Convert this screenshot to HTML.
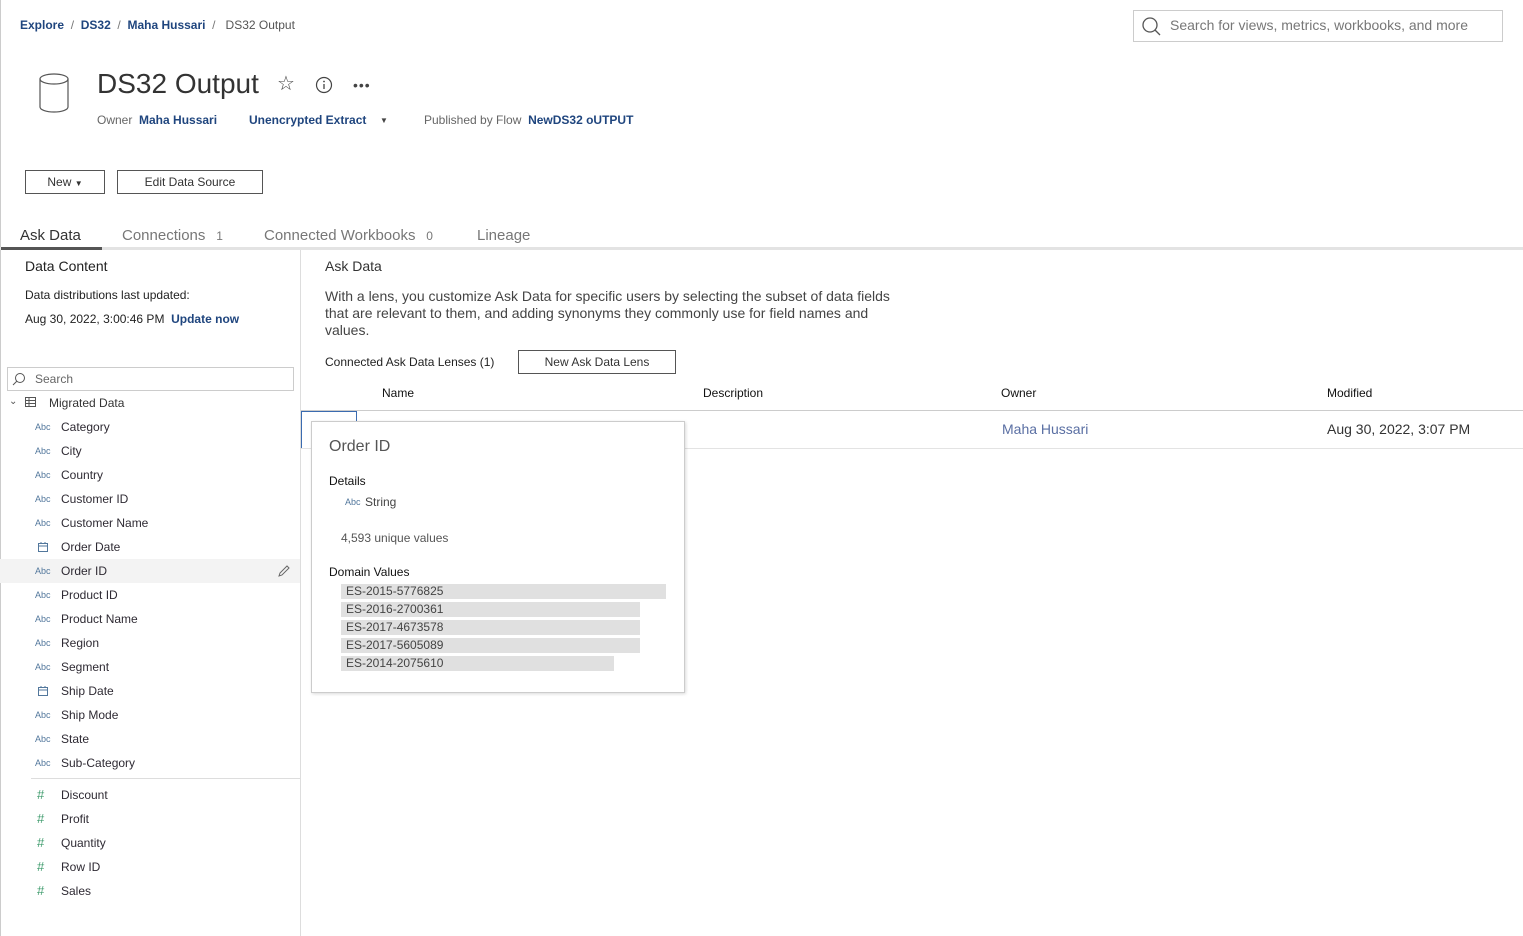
<!DOCTYPE html>
<html><head><meta charset="utf-8"><style>
*{margin:0;padding:0;box-sizing:border-box}
body{width:1523px;height:936px;position:relative;overflow:hidden;background:#fff;font-family:"Liberation Sans",sans-serif;color:#333}
.a{position:absolute;white-space:nowrap;line-height:1}
.l{color:#1f457e}
.abc{position:absolute;left:35px;font-size:9px;color:#52779c;line-height:1}
.fn{position:absolute;left:61px;font-size:12px;line-height:1;color:#2e2a33}
.hash{position:absolute;left:37px;font-size:13px;color:#3e9b6c;line-height:1}
.dv{position:absolute;left:341px;height:15px;background:#e0e0e0;font-size:12px;padding-left:5px;line-height:15px;color:#444}
</style></head><body>
<div class="a" style="left:0;top:0;width:1px;height:936px;background:#ccc"></div>
<!-- breadcrumb -->
<div class="a" style="left:20px;top:19px;font-size:12px"><span class="l" style="font-weight:bold">Explore</span> <span style="color:#777">&nbsp;/&nbsp;</span> <span class="l" style="font-weight:bold">DS32</span> <span style="color:#777">&nbsp;/&nbsp;</span> <span class="l" style="font-weight:bold">Maha Hussari</span> <span style="color:#777">&nbsp;/&nbsp;</span> <span style="color:#555">&nbsp;DS32 Output</span></div>
<!-- search -->
<div class="a" style="left:1133px;top:10px;width:370px;height:32px;border:1px solid #ccc"></div>
<svg class="a" style="left:1141px;top:16px" width="22" height="22"><circle cx="9" cy="9" r="7" fill="none" stroke="#555" stroke-width="1.3"/><line x1="14" y1="14" x2="19" y2="19" stroke="#555" stroke-width="1.3"/></svg>
<div class="a" style="left:1170px;top:18px;font-size:14px;color:#777">Search for views, metrics, workbooks, and more</div>
<!-- header -->
<svg class="a" style="left:37px;top:71px" width="34" height="44"><ellipse cx="17" cy="8" rx="14" ry="5" fill="none" stroke="#555" stroke-width="1.2"/><path d="M3 8 V36 A14 5 0 0 0 31 36 V8" fill="none" stroke="#555" stroke-width="1.2"/></svg>
<div class="a" style="left:97px;top:70px;font-size:28px;color:#333">DS32 Output</div>
<div class="a" style="left:277px;top:74px;font-size:20px;color:#444">☆</div>
<svg class="a" style="left:315px;top:76px" width="18" height="18"><circle cx="9" cy="9" r="7.5" fill="none" stroke="#444" stroke-width="1.2"/><line x1="9" y1="8" x2="9" y2="13" stroke="#444" stroke-width="1.3"/><circle cx="9" cy="5.5" r="0.9" fill="#444"/></svg>
<div class="a" style="left:353px;top:78px;font-size:14px;color:#444;letter-spacing:1px">•••</div>
<div class="a" style="left:97px;top:114px;font-size:12px;color:#666">Owner&nbsp; <span class="l" style="font-weight:bold">Maha Hussari</span></div>
<div class="a l" style="left:249px;top:114px;font-size:12px;font-weight:bold">Unencrypted Extract</div>
<div class="a" style="left:380px;top:117px;font-size:8px;color:#444">▼</div>
<div class="a" style="left:424px;top:114px;font-size:12px;color:#666">Published by Flow&nbsp; <span class="l" style="font-weight:bold">NewDS32 oUTPUT</span></div>
<!-- buttons -->
<div class="a" style="left:25px;top:170px;width:80px;height:24px;border:1px solid #555;font-size:12px;text-align:center;line-height:22px">New <span style="font-size:8px">▼</span></div>
<div class="a" style="left:117px;top:170px;width:146px;height:24px;border:1px solid #555;font-size:12px;text-align:center;line-height:22px;color:#333">Edit Data Source</div>
<!-- tabs -->
<div class="a" style="left:20px;top:228px;font-size:15px;color:#333">Ask Data</div>
<div class="a" style="left:122px;top:228px;font-size:15px;color:#777">Connections <span style="font-size:12px">&nbsp;&nbsp;1</span></div>
<div class="a" style="left:264px;top:228px;font-size:15px;color:#777">Connected Workbooks <span style="font-size:12px">&nbsp;&nbsp;0</span></div>
<div class="a" style="left:477px;top:228px;font-size:15px;color:#777">Lineage</div>
<div class="a" style="left:0;top:247px;width:1523px;height:3px;background:#e3e3e3"></div>
<div class="a" style="left:1px;top:247px;width:101px;height:3px;background:#555"></div>
<!-- left panel -->
<div class="a" style="left:300px;top:250px;width:1px;height:686px;background:#ddd"></div>
<div class="a" style="left:25px;top:259px;font-size:14px;color:#222">Data Content</div>
<div class="a" style="left:25px;top:289px;font-size:12px;color:#222">Data distributions last updated:</div>
<div class="a" style="left:25px;top:313px;font-size:12px;color:#222">Aug 30, 2022, 3:00:46 PM&nbsp; <span class="l" style="font-weight:bold">Update now</span></div>
<div class="a" style="left:7px;top:367px;width:287px;height:24px;border:1px solid #ccc"></div>
<svg class="a" style="left:12px;top:372px" width="14" height="14"><circle cx="8" cy="6" r="4.5" fill="none" stroke="#555" stroke-width="1"/><line x1="5" y1="9" x2="1" y2="13" stroke="#555" stroke-width="1"/></svg>
<div class="a" style="left:35px;top:373px;font-size:12px;color:#666">Search</div>
<div class="a" style="left:9px;top:397px;font-size:10px;color:#555">⌄</div>
<svg class="a" style="left:25px;top:397px" width="12" height="11"><rect x="0.5" y="0.5" width="10" height="9" fill="none" stroke="#555"/><path d="M0.5 3.5H10.5M0.5 6.5H10.5M4 0.5V9.5" stroke="#555" fill="none"/></svg>
<div class="a" style="left:49px;top:397px;font-size:12px;color:#333">Migrated Data</div>
<div class="a" style="left:0;top:559px;width:300px;height:24px;background:#f3f3f3"></div>
<svg class="a" style="left:277px;top:564px" width="14" height="14"><path d="M2 12 L3 9 L10 2 L12 4 L5 11 Z" fill="none" stroke="#666"/></svg>
<div class="abc" style="top:423px">Abc</div><div class="fn" style="top:421px">Category</div>
<div class="abc" style="top:447px">Abc</div><div class="fn" style="top:445px">City</div>
<div class="abc" style="top:471px">Abc</div><div class="fn" style="top:469px">Country</div>
<div class="abc" style="top:495px">Abc</div><div class="fn" style="top:493px">Customer ID</div>
<div class="abc" style="top:519px">Abc</div><div class="fn" style="top:517px">Customer Name</div>
<svg class="a" style="left:37px;top:541px" width="12" height="12"><rect x="1.5" y="2.5" width="9" height="8" fill="none" stroke="#52779c"/><path d="M1.5 5H10.5M4 1V3M8 1V3" stroke="#52779c"/></svg><div class="fn" style="top:541px">Order Date</div>
<div class="abc" style="top:567px">Abc</div><div class="fn" style="top:565px">Order ID</div>
<div class="abc" style="top:591px">Abc</div><div class="fn" style="top:589px">Product ID</div>
<div class="abc" style="top:615px">Abc</div><div class="fn" style="top:613px">Product Name</div>
<div class="abc" style="top:639px">Abc</div><div class="fn" style="top:637px">Region</div>
<div class="abc" style="top:663px">Abc</div><div class="fn" style="top:661px">Segment</div>
<svg class="a" style="left:37px;top:685px" width="12" height="12"><rect x="1.5" y="2.5" width="9" height="8" fill="none" stroke="#52779c"/><path d="M1.5 5H10.5M4 1V3M8 1V3" stroke="#52779c"/></svg><div class="fn" style="top:685px">Ship Date</div>
<div class="abc" style="top:711px">Abc</div><div class="fn" style="top:709px">Ship Mode</div>
<div class="abc" style="top:735px">Abc</div><div class="fn" style="top:733px">State</div>
<div class="abc" style="top:759px">Abc</div><div class="fn" style="top:757px">Sub-Category</div>
<div class="a" style="left:31px;top:778px;width:269px;height:1px;background:#ddd"></div>
<div class="hash" style="top:788px">#</div><div class="fn" style="top:789px">Discount</div>
<div class="hash" style="top:812px">#</div><div class="fn" style="top:813px">Profit</div>
<div class="hash" style="top:836px">#</div><div class="fn" style="top:837px">Quantity</div>
<div class="hash" style="top:860px">#</div><div class="fn" style="top:861px">Row ID</div>
<div class="hash" style="top:884px">#</div><div class="fn" style="top:885px">Sales</div>
<!-- main -->
<div class="a" style="left:325px;top:259px;font-size:14px;color:#333">Ask Data</div>
<div class="a" style="left:325px;top:288px;font-size:14px;color:#444;line-height:17px">With a lens, you customize Ask Data for specific users by selecting the subset of data fields<br>that are relevant to them, and adding synonyms they commonly use for field names and<br>values.</div>
<div class="a" style="left:325px;top:356px;font-size:12px;color:#222">Connected Ask Data Lenses (1)</div>
<div class="a" style="left:518px;top:350px;width:158px;height:24px;border:1px solid #555;font-size:12px;text-align:center;line-height:22px">New Ask Data Lens</div>
<div class="a" style="left:382px;top:387px;font-size:12px;color:#111">Name</div>
<div class="a" style="left:703px;top:387px;font-size:12px;color:#111">Description</div>
<div class="a" style="left:1001px;top:387px;font-size:12px;color:#111">Owner</div>
<div class="a" style="left:1327px;top:387px;font-size:12px;color:#111">Modified</div>
<div class="a" style="left:301px;top:410px;width:1222px;height:1px;background:#ccc"></div>
<div class="a" style="left:301px;top:448px;width:1222px;height:1px;background:#e3e3e3"></div>
<div class="a" style="left:301px;top:411px;width:56px;height:37px;border:1px solid #3a6bb0;border-right:none;border-bottom:none"></div>
<div class="a" style="left:356px;top:411px;width:1px;height:11px;background:#3a6bb0"></div>
<div class="a" style="left:1002px;top:422px;font-size:14px;color:#5a6fa3">Maha Hussari</div>
<div class="a" style="left:1327px;top:422px;font-size:14px;color:#333">Aug 30, 2022, 3:07 PM</div>
<!-- popup -->
<div class="a" style="left:311px;top:421px;width:374px;height:272px;background:#fff;border:1px solid #ccc;box-shadow:1px 1px 3px rgba(0,0,0,.15)"></div>
<div class="a" style="left:329px;top:439px;font-size:16px;color:#555">Order ID</div>
<div class="a" style="left:329px;top:475px;font-size:12px;color:#111">Details</div>
<div class="a" style="left:345px;top:498px;font-size:9px;color:#52779c">Abc</div>
<div class="a" style="left:365px;top:496px;font-size:12px;color:#444">String</div>
<div class="a" style="left:341px;top:532px;font-size:12px;color:#555">4,593 unique values</div>
<div class="a" style="left:329px;top:566px;font-size:12px;color:#111">Domain Values</div>
<div class="dv" style="top:584px;width:325px">ES-2015-5776825</div>
<div class="dv" style="top:602px;width:299px">ES-2016-2700361</div>
<div class="dv" style="top:620px;width:299px">ES-2017-4673578</div>
<div class="dv" style="top:638px;width:299px">ES-2017-5605089</div>
<div class="dv" style="top:656px;width:273px">ES-2014-2075610</div>
</body></html>
